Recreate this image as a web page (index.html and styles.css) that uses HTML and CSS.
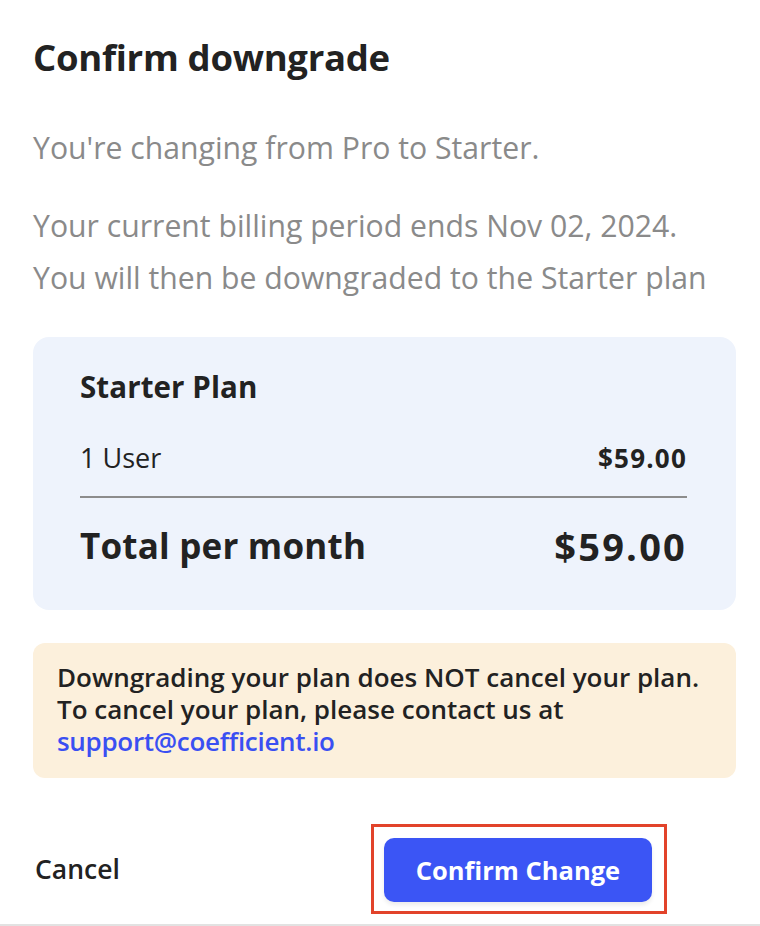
FILE: index.html
```html
<!DOCTYPE html>
<html lang="en">
<head>
  <meta charset="UTF-8" />
  <meta name="viewport" content="width=device-width, initial-scale=1" />
  <title>Confirm downgrade</title>
  <link rel="stylesheet" href="styles.css">
</head>
<body>
  <div class="modal">
    <h1 class="modal-title">Confirm downgrade</h1>
    <p class="modal-text first">You're changing from Pro to Starter.</p>
    <p class="modal-text">Your current billing period ends Nov 02, 2024.<br>You will then be downgraded to the Starter plan</p>

    <div class="plan-card">
      <h2>Starter Plan</h2>
      <div class="plan-row">
        <span>1 User</span>
        <strong>$59.00</strong>
      </div>
      <div class="plan-total">
        <span>Total per month</span>
        <span class="price">$59.00</span>
      </div>
    </div>

    <div class="notice">
      Downgrading your plan does NOT cancel your plan.<br>
      To cancel your plan, please contact us at<br>
      <a href="mailto:support@coefficient.io">support@coefficient.io</a>
    </div>

    <div class="modal-footer">
      <button class="btn-cancel">Cancel</button>
      <div class="focus-ring">
        <button class="btn-confirm">Confirm Change</button>
      </div>
    </div>
  </div>
</body>
</html>
```

FILE: styles.css
```css
body {
  margin: 0;
  font-family: 'Open Sans', 'Liberation Sans', sans-serif;
  background-color: white;
  color: #222;
}
.modal {
  width: 760px;
  height: 926px;
  box-sizing: border-box;
  padding: 37px 24px 0 33px;
  border-bottom: 2px solid #e2e2e2;
  overflow: hidden;
}
.modal-title {
  margin: 0;
  font-size: 36.5px;
  line-height: 40px;
  font-weight: 700;
  color: #222;
  letter-spacing: -0.3px;
}
.modal-text {
  margin: 26px 0 0;
  font-size: 30.2px;
  line-height: 52px;
  color: #8a8a8a;
}
.modal-text.first {
  margin-top: 45px;
}
.plan-card {
  margin-top: 33px;
  background-color: #eef3fc;
  border-radius: 16px;
  padding: 34px 49px 42px 47px;
}
.plan-card h2 {
  margin: 0;
  font-size: 29.5px;
  line-height: 32px;
  font-weight: 700;
  letter-spacing: 0.1px;
}
.plan-row {
  display: flex;
  justify-content: space-between;
  margin-top: 40px;
  padding-bottom: 23px;
  border-bottom: 2px solid #8c8c8c;
  font-size: 27px;
  line-height: 30px;
}
.plan-row strong {
  font-size: 26px;
  font-weight: 700;
  letter-spacing: 1.2px;
}
.plan-total {
  display: flex;
  justify-content: space-between;
  margin-top: 26px;
  font-size: 35px;
  line-height: 44px;
  font-weight: 700;
  letter-spacing: 0.2px;
}
.plan-total .price {
  font-size: 38px;
  letter-spacing: 2.2px;
}
.notice {
  margin-top: 33px;
  background-color: #fcf0dc;
  border-radius: 12px;
  padding: 18px 20px 21px 24px;
  font-size: 26px;
  line-height: 32px;
  font-weight: 600;
  color: #222;
}
.notice a {
  color: #3a4ff2;
  text-decoration: none;
  letter-spacing: -0.3px;
}
.modal-footer {
  display: flex;
  justify-content: space-between;
  align-items: center;
  margin-top: 46px;
  padding-right: 69px;
}
.btn-cancel {
  background: none;
  border: none;
  padding: 0 0 0 2px;
  font-family: inherit;
  font-size: 26.5px;
  font-weight: 600;
  color: #222;
  cursor: pointer;
}
.focus-ring {
  border: 3px solid #e2432a;
  padding: 11px 12px 9px 10px;
}
.btn-confirm {
  display: block;
  width: 268px;
  height: 64px;
  background-color: #3b55f5;
  color: white;
  border: none;
  border-radius: 10px;
  font-family: inherit;
  font-size: 25.5px;
  font-weight: 700;
  box-shadow: 0 3px 4px rgb(0 0 0 / 0.08);
  cursor: pointer;
}
```
